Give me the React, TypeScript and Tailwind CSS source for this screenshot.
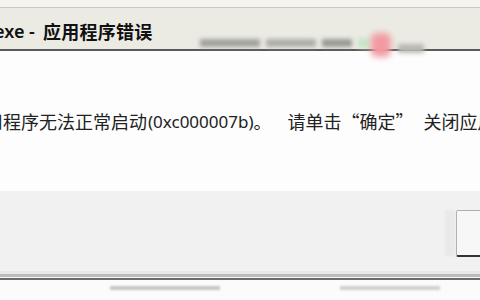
import React from "react";

const cjk = { fontFamily: '"Noto Sans CJK SC", "Noto Sans", sans-serif' };
const latin = { fontFamily: '"Noto Sans", "Noto Sans CJK SC", sans-serif' };

export default function App() {
  return (
    <div className="w-[480px] h-[300px] overflow-hidden bg-white flex flex-col" style={cjk}>
      {/* top strip */}
      <div className="h-[8px] bg-[#f4f4ef] border-b border-[#c9c9c2]" />
      {/* title bar */}
      <div className="h-[43px] bg-[#ebebe4] flex items-center pt-[5px] relative border-b-2 border-[#5a5a5a]">
        <div className="-ml-[6px] text-[18px] font-bold text-[#111] whitespace-nowrap leading-none flex items-center">
          <span style={latin} className="font-semibold">exe -</span>
          <span className="ml-[8px] tracking-[0.3px]">应用程序错误</span>
        </div>
        <div className="absolute left-[200px] top-[30px] flex items-center gap-[6px] blur-[2px]">
          <div className="w-[60px] h-[8px] bg-[#a2a29d]" />
          <div className="w-[50px] h-[8px] bg-[#adada8]" />
          <div className="w-[30px] h-[8px] bg-[#999994]" />
          <div className="w-[12px] h-[10px] bg-[#c6e6c8]" />
        </div>
        <div className="absolute left-[371px] top-[25px] w-[20px] h-[24px] rounded-[6px] bg-[#f29aa2] blur-[3px]" />
        <div className="absolute left-[398px] top-[36px] w-[26px] h-[9px] bg-[#b8b8b3] blur-[2px]" />
      </div>
      {/* message body */}
      <div className="h-[140px] bg-[#fdfdfd] flex items-center">
        <div className="-ml-[15px] text-[18px] text-[#222] whitespace-nowrap leading-none flex items-center">
          <span>用程序无法正常启动</span>
          <span style={latin} className="text-[17px] ml-[1px]">(0xc000007b)</span>
          <span>。</span>
          <span className="ml-[16px]">请单击“确定”</span>
          <span className="ml-[10px]">关闭应用程序。</span>
        </div>
      </div>
      {/* button row */}
      <div className="h-[80px] bg-[#f1f1f1] flex items-start justify-end pt-[19px]">
        <div className="w-[10px] h-[46px] bg-[#e9e9e9] mr-[1px] blur-[1px]" />
        <div className="-mr-[20px] w-[44px] h-[47px] border border-[#adadad] border-b-[2px] border-b-[#333] bg-[#f7f7f7] rounded-[2px]" />
      </div>
      <div className="h-[3px] bg-[#e8e8e8]" />
      <div className="h-[3px] bg-[#bcbcbc]" />
      <div className="h-[1px] bg-[#f5f5f5]" />
      <div className="h-[2px] bg-[#6a6a6a]" />
      <div className="flex-1 bg-[#fbfbfb] relative">
        <div className="absolute left-[110px] top-[6px] w-[110px] h-[4px] bg-[#c6c6c6] blur-[1px]" />
        <div className="absolute left-[340px] top-[6px] w-[100px] h-[4px] bg-[#cfcfcf] blur-[1px]" />
      </div>
    </div>
  );
}
